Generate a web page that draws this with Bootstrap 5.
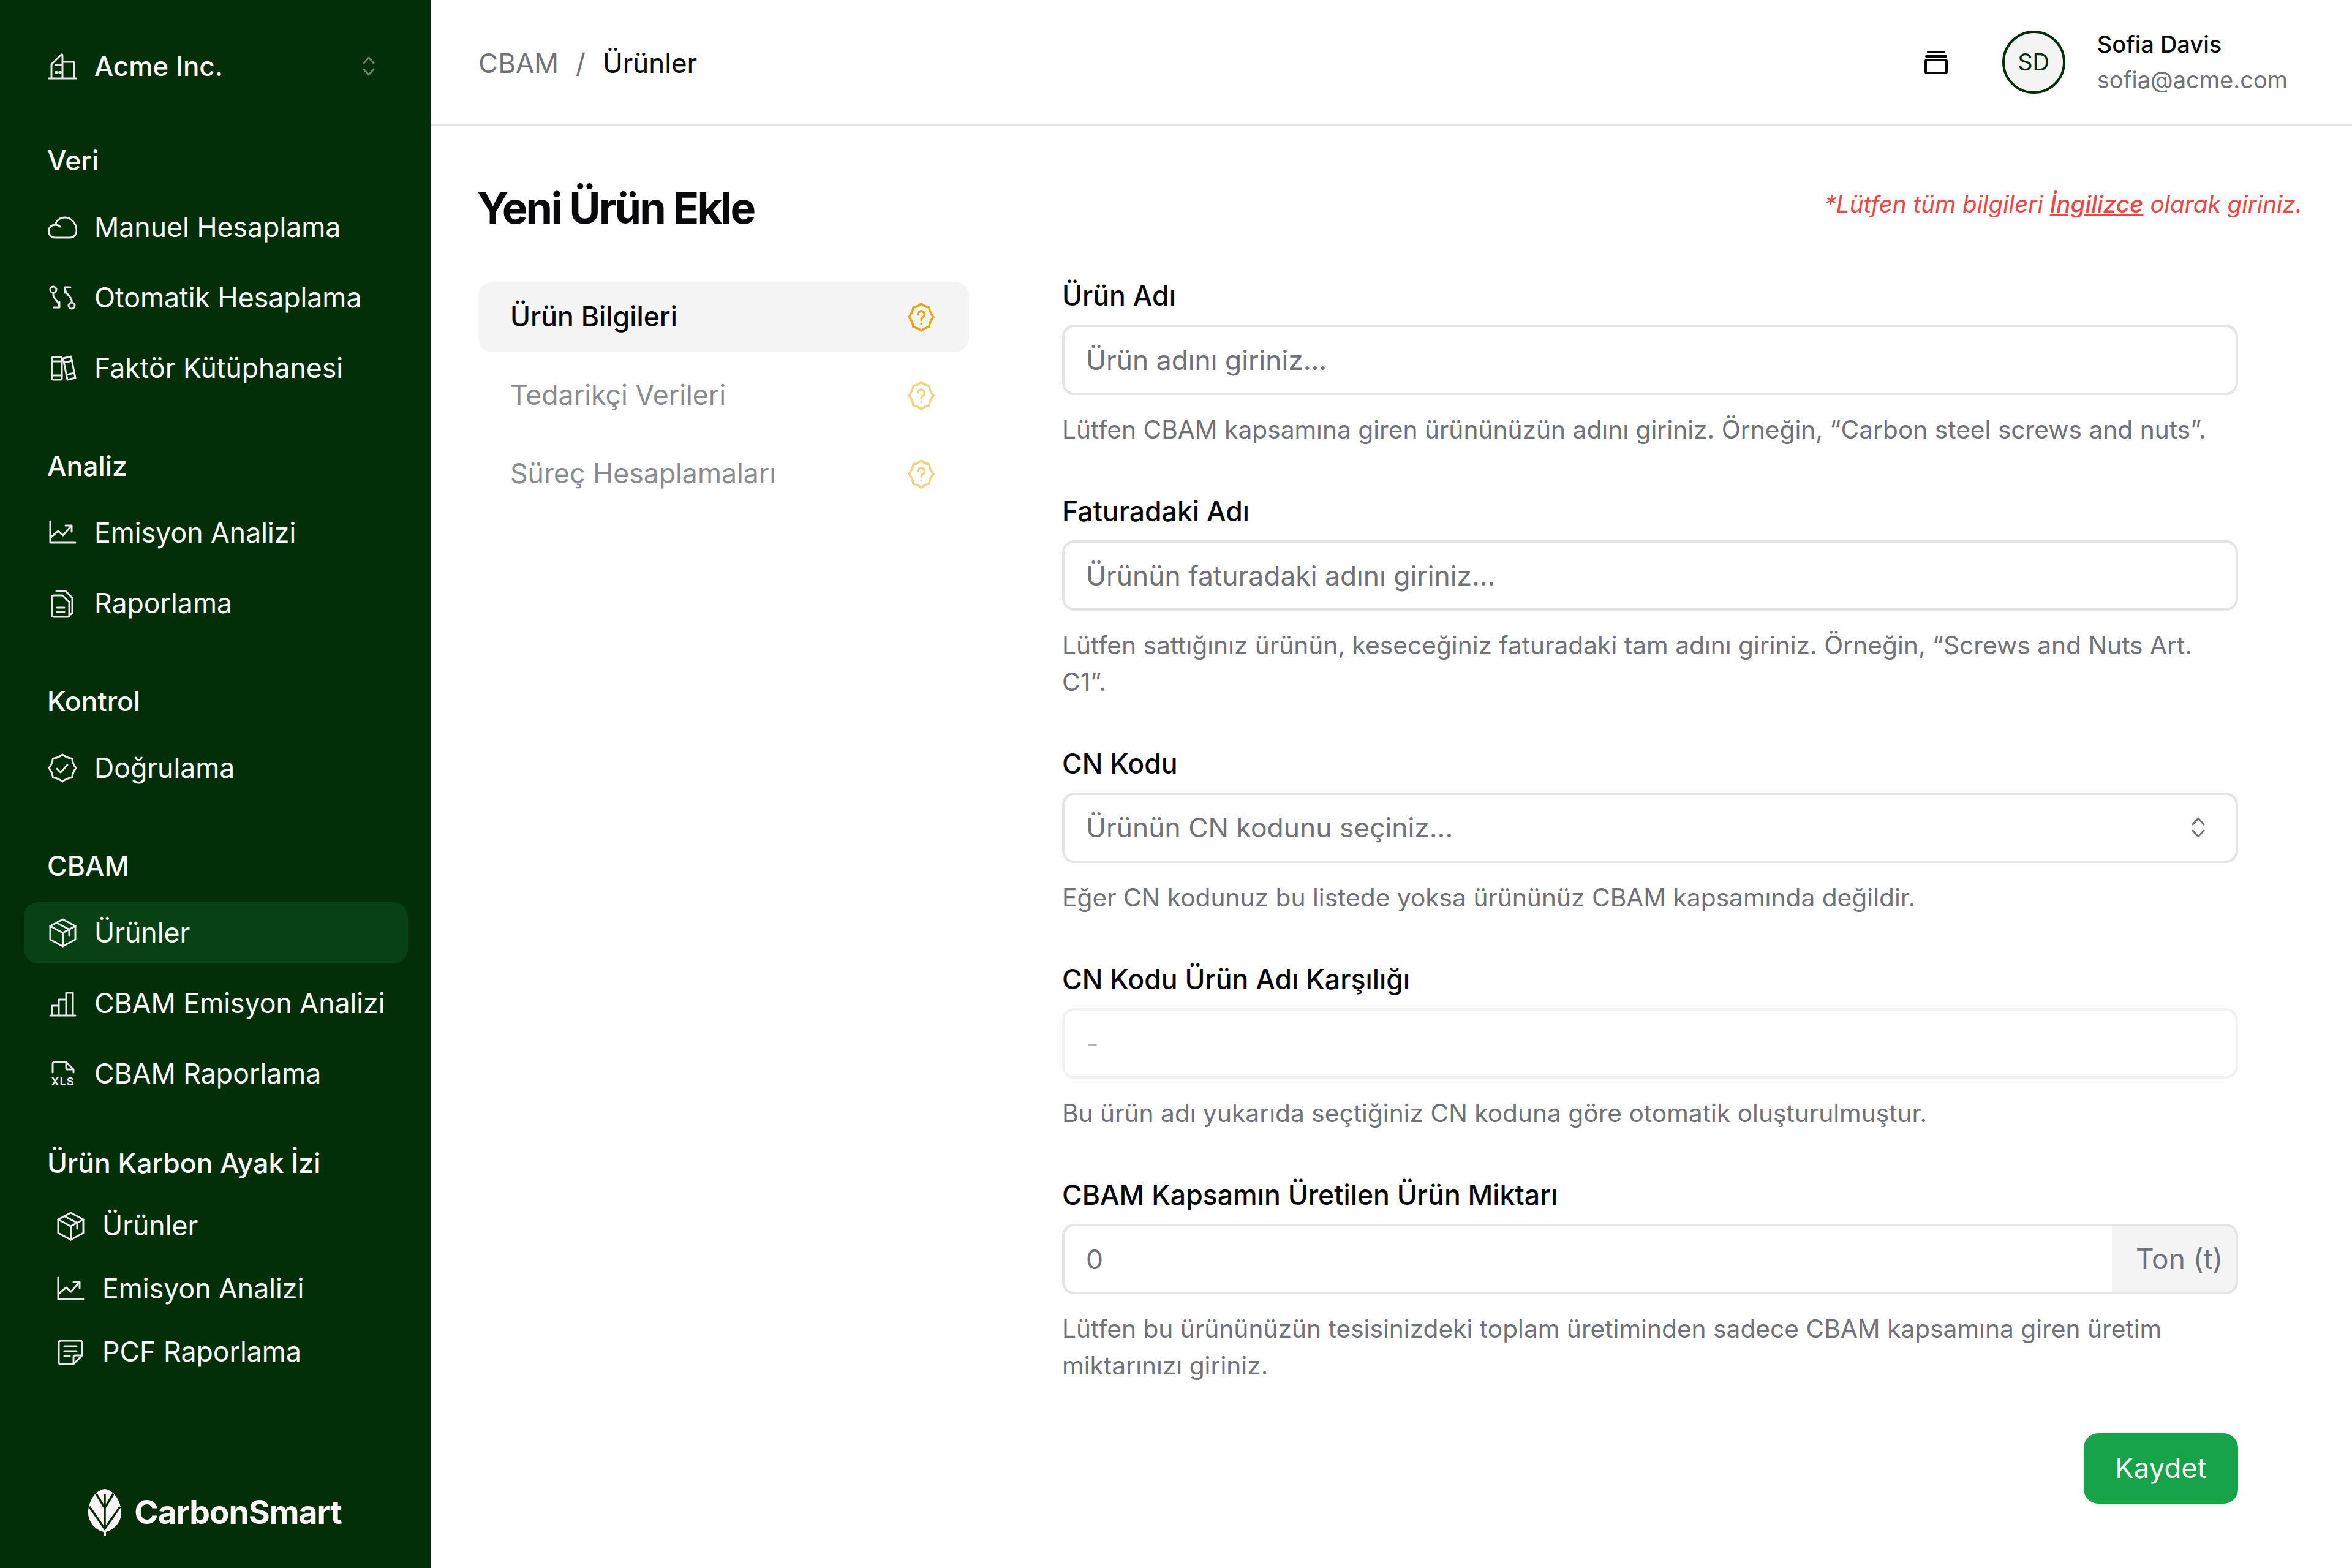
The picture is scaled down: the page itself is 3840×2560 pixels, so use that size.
<!DOCTYPE html>
<html lang="tr">
<head>
    <meta charset="UTF-8">
    <meta name="viewport" content="width=device-width, initial-scale=1.0">
    <title>Yeni Ürün Ekle</title>
    <link href="https://cdn.jsdelivr.net/npm/bootstrap@5.3.0/dist/css/bootstrap.min.css" rel="stylesheet">
    <style>
        body { font-family: Inter, "Liberation Sans", sans-serif; font-size: 40px; color: #09090b; background: #fff; }
        .app-shell { min-height: 2560px; }

        /* Sidebar */
        .side-bar { width: 704px; flex-shrink: 0; background: #022f08; color: #fafafa; padding: 58px 38px 51px 39px; }
        .brand-row { height: 100px; padding: 0 39px; gap: 28px; font-size: 44px; font-weight: 500; }
        .brand-chevron { margin-left: auto; margin-right: 15px; }
        .side-title { height: 60px; line-height: 60px; margin: 74px 0 29px 38px; font-size: 44.500px; font-weight: 500; }
        .side-title.next-group { margin-top: 80px; }
        .side-title.last-group { margin-top: 66px; margin-bottom: 30px; }
        .side-list { gap: 15px; }
        .side-list .nav-link { height: 100px; padding: 0 15px 0 39px; gap: 28px; display: flex; align-items: center; color: #fafafa; font-size: 44.600px; border-radius: 24px; }
        .side-list .nav-link.active { background: #084214; color: #fafafa; }
        .side-list.sub-list { gap: 18px; margin-left: 13px; }
        .side-list.sub-list .nav-link { height: 85px; }
        .side-icon { width: 48px; height: 48px; flex-shrink: 0; fill: none; stroke: #e8e8e8; stroke-width: 3; stroke-linecap: round; stroke-linejoin: round; }
        .brand-logo { margin-top: auto; gap: 20px; padding-right: 4px; font-size: 53.500px; font-weight: 700; letter-spacing: -.02em; color: #fdf4f4; }

        /* Header */
        .top-bar { height: 205px; padding: 0 105px 0 77px; border-bottom: 3px solid #e4e4e7; }
        .top-bar .breadcrumb { --bs-breadcrumb-margin-bottom: 0; --bs-breadcrumb-item-padding-x: 28px; --bs-breadcrumb-divider-color: #71717a; font-size: 44px; padding-top: 3px; }
        .top-bar .breadcrumb-item a { color: #71717a; text-decoration: none; }
        .top-bar .breadcrumb-item.active { color: #09090b; }
        .user-avatar { width: 103px; height: 103px; margin-left: 88px; border: 4px solid #022f08; background: #f4f4f5; color: #022f08; font-size: 38px; }
        .user-info { margin-left: 52px; }
        .user-name { font-size: 38px; font-weight: 500; line-height: 58px; }
        .user-mail { font-size: 38px; line-height: 58px; color: #71717a; }

        /* Content */
        .page-body { padding: 0 81px 0 77px; }
        .page-title { font-size: 70px; font-weight: 700; letter-spacing: -.04em; line-height: 90px; margin: 0 0 0 -2px; }
        .title-row { height: 90px; margin-top: 90px; }
        .en-note { color: #ef4444; font-style: italic; font-size: 38.700px; position: relative; top: -7px; }
        .en-note u { font-weight: 500; }
        .form-area { margin-top: 45px; }
        .step-list { width: 801px; flex-shrink: 0; margin-top: 30px; margin-right: 152px; gap: 13px; }
        .step-list .nav-link { height: 115px; padding: 0 54px 0 52px; display: flex; align-items: center; justify-content: space-between; color: #8a8a91; font-size: 44.600px; border-radius: 24px; }
        .step-list .nav-link.active { background: #f4f4f5; color: #09090b; font-weight: 500; }
        .step-list .nav-link svg { opacity: .5; }
        .step-list .nav-link.active svg { opacity: 1; }
        .step-icon { width: 48px; height: 48px; fill: none; stroke: #e5a70a; stroke-width: 3.500; stroke-linecap: round; stroke-linejoin: round; }
        .form-col { width: 1920px; margin-top: 23px; }
        .form-block { margin-bottom: 73px; }
        .form-block .form-label { display: block; font-size: 44.600px; font-weight: 500; line-height: 60px; margin-bottom: 17px; color: #09090b; }
        .form-block .form-control, .form-block .form-select { height: 115px; padding: 0 35px; font-size: 44.400px; color: #71717a; border: 4px solid #e4e4e7; border-radius: 20px; background-image: none; box-shadow: none; }
        .form-block .form-control::placeholder { color: #71717a; opacity: 1; }
        .form-block .form-control:disabled { background: #fff; border-color: #f1f1f3; }
        .form-block .form-control:disabled::placeholder { color: #b4b4b9; }
        .form-block .input-group-text { width: 207px; padding: 0 28px 0 40px; font-size: 46px; color: #71717a; background: #f4f4f5; border: 4px solid #e4e4e7; border-left: 0; border-radius: 0 20px 20px 0; }
        .form-block .input-group .form-control { border-right: 0; border-radius: 20px 0 0 20px; }
        .form-block .form-text { margin-top: 27px; font-size: 40.700px; line-height: 60px; color: #71717a; }
        .select-chevron { position: absolute; right: 54px; top: 39px; pointer-events: none; }
        .form-actions { margin-top: 74px; }
        .save-btn { width: 252px; height: 115px; margin-top: 6px; font-size: 45.500px; color: #fafafa; background: #16a34a; border: 0; border-radius: 24px; box-shadow: 0 3px 6px rgba(0, 0, 0, .08); }
    </style>
</head>
<body>
<svg width="0" height="0" class="position-absolute">
    <symbol id="ico-box" viewBox="0 0 48 48"><path d="M24.500 2 45 13v22L24.500 46 4 35V13Z"/><path d="M4 13l20.500 11L45 13M24.500 24v22M14 7.500 35 18.500V28"/></symbol>
    <symbol id="ico-chart" viewBox="0 0 48 48"><path d="M4 5v35h41M4 32l13-11 8 7 13-15M29 12h10v10"/></symbol>
    <symbol id="ico-badge-q" viewBox="0 0 48 48"><path d="M24 2Q30.900 7.400 37 8Q37.500 15.500 44 24Q37.500 30.900 37 40Q30.900 40.600 24 46Q17.100 40.600 11 40Q10.500 30.900 4 24Q10.500 15.500 11 8Q17.100 7.400 24 2Z"/><path d="M18.500 19.500a5.500 5.500 0 1 1 8.500 4.600c-2 1.300-3 2.400-3 4.400M24 34.500v.1"/></symbol>
</svg>

<div class="app-shell d-flex">
    <!-- Sol menü -->
    <aside class="side-bar d-flex flex-column">
        <div class="brand-row d-flex align-items-center">
            <svg class="side-icon" viewBox="0 0 48 48"><path d="M1 44h46M6 43V23q0-2 1.500-3.500L21 6q3-3 3 1v36M24 17h17q2 0 2 2v24"/><path d="M13 22h2M19 22h2M13 34h2M19 34h2" stroke-width="4"/></svg>
            <span>Acme Inc.</span>
            <svg class="brand-chevron" width="20" height="32" viewBox="0 0 20 32" fill="none" stroke="#fff" stroke-opacity=".4" stroke-width="3" stroke-linecap="round" stroke-linejoin="round"><path d="M2 11 10 2l8 9M2 21l8 9 8-9"/></svg>
        </div>

        <div class="side-title">Veri</div>
        <nav class="nav flex-column side-list">
            <a class="nav-link" href="#"><svg class="side-icon" viewBox="0 0 48 48"><path d="M12 41h24c6.500 0 11-5 11-11.500C47 18 38 8 28 8c-8 0-14 5-16 12C5.500 20 1.500 25 1.500 30.500 1.500 36.500 6 41 12 41Z"/><path d="M12 20c3 0 6 1 8 3"/></svg>Manuel Hesaplama</a>
            <a class="nav-link" href="#"><svg class="side-icon" viewBox="0 0 48 48"><circle cx="9" cy="11" r="5"/><circle cx="39" cy="37" r="5"/><path d="M9 16v4c0 5 10 10 10 20M10 40h9v-9M39 32v-4c0-5-11-10-11-20M37 7H28v9"/></svg>Otomatik Hesaplama</a>
            <a class="nav-link" href="#"><svg class="side-icon" viewBox="0 0 48 48"><rect x="7" y="6" width="16" height="37" rx="2"/><path d="M7 13h16M7 36h16M25 8l13-3 7 35-13 3ZM27 15l13-3M31 35l12-3"/></svg>Faktör Kütüphanesi</a>
        </nav>

        <div class="side-title next-group">Analiz</div>
        <nav class="nav flex-column side-list">
            <a class="nav-link" href="#"><svg class="side-icon"><use href="#ico-chart"/></svg>Emisyon Analizi</a>
            <a class="nav-link" href="#"><svg class="side-icon" viewBox="0 0 48 48"><path d="M14 4h15l11 11v24q0 2-3 3M7 14q0-3 3-3h14l11 11v21q0 3-3 3H10q-3 0-3-3Z"/><path d="M15 31h12M15 38h12"/></svg>Raporlama</a>
        </nav>

        <div class="side-title next-group">Kontrol</div>
        <nav class="nav flex-column side-list">
            <a class="nav-link" href="#"><svg class="side-icon" viewBox="0 0 48 48"><path d="M24 2Q30.900 7.400 39.600 8.400Q40.600 17.100 46 24Q40.600 30.900 39.600 39.600Q30.900 40.600 24 46Q17.100 40.600 8.400 39.600Q7.400 30.900 2 24Q7.400 17.100 8.400 8.400Q17.100 7.400 24 2Z"/><path d="M15 25l6 6 11-12"/></svg>Doğrulama</a>
        </nav>

        <div class="side-title next-group">CBAM</div>
        <nav class="nav flex-column side-list">
            <a class="nav-link active" href="#"><svg class="side-icon"><use href="#ico-box"/></svg>Ürünler</a>
            <a class="nav-link" href="#"><svg class="side-icon" viewBox="0 0 48 48"><path d="M4 44h41M7 43V28h11v15M18 43V18h12v25M30 43V7h11v36"/></svg>CBAM Emisyon Analizi</a>
            <a class="nav-link" href="#"><svg class="side-icon" viewBox="0 0 48 48"><path d="M8 22V8q0-3 3-3h19l12 12v5M30 5v10q0 2 2 2h10"/><text x="24.500" y="43" text-anchor="middle" font-family="Inter, sans-serif" font-size="18" font-weight="700" letter-spacing="1" fill="#e8e8e8" stroke="none">XLS</text></svg>CBAM Raporlama</a>
        </nav>

        <div class="side-title last-group">Ürün Karbon Ayak İzi</div>
        <nav class="nav flex-column side-list sub-list">
            <a class="nav-link" href="#"><svg class="side-icon"><use href="#ico-box"/></svg>Ürünler</a>
            <a class="nav-link" href="#"><svg class="side-icon"><use href="#ico-chart"/></svg>Emisyon Analizi</a>
            <a class="nav-link" href="#"><svg class="side-icon" viewBox="0 0 48 48"><path d="M29 43H8q-3 0-3-3V8q0-3 3-3h32q3 0 3 3v21ZM29 43V32q0-3 3-3h11M14 14h20M14 22h20M14 30h9"/></svg>PCF Raporlama</a>
        </nav>

        <div class="brand-logo d-flex align-items-center justify-content-center">
            <svg width="56" height="78" viewBox="0 0 56 78">
                <path d="M28 1C12 3 1 22 1 40c0 15 12 28 25 31v7h4v-7c13-3 25-16 25-31C55 22 44 3 28 1Z" fill="#fdf4f4"/>
                <path d="M28 10v56M14 9 28 32 42 9M3 30l25 36 25-36" fill="none" stroke="#022f08" stroke-width="3.500"/>
            </svg>
            <span>CarbonSmart</span>
        </div>
    </aside>

    <!-- Ana içerik -->
    <main class="flex-grow-1 min-w-0">
        <header class="top-bar d-flex align-items-center">
            <ol class="breadcrumb">
                <li class="breadcrumb-item"><a href="#">CBAM</a></li>
                <li class="breadcrumb-item active">Ürünler</li>
            </ol>
            <svg class="ms-auto" width="40" height="40" viewBox="0 0 40 40" fill="none" stroke="#09090b" stroke-width="4" stroke-linecap="round" stroke-linejoin="round"><path d="M7 4h26M4 11h32"/><rect x="3" y="17" width="34" height="21" rx="2"/></svg>
            <div class="user-avatar rounded-circle d-flex align-items-center justify-content-center">SD</div>
            <div class="user-info">
                <div class="user-name">Sofia Davis</div>
                <div class="user-mail">sofia@acme.com</div>
            </div>
        </header>

        <div class="page-body">
            <div class="title-row d-flex align-items-center justify-content-between">
                <h1 class="page-title">Yeni Ürün Ekle</h1>
                <span class="en-note">*Lütfen tüm bilgileri <u>İngilizce</u> olarak giriniz.</span>
            </div>

            <div class="form-area d-flex align-items-start">
                <nav class="nav flex-column step-list">
                    <a class="nav-link active" href="#">Ürün Bilgileri<svg class="step-icon"><use href="#ico-badge-q"/></svg></a>
                    <a class="nav-link" href="#">Tedarikçi Verileri<svg class="step-icon"><use href="#ico-badge-q"/></svg></a>
                    <a class="nav-link" href="#">Süreç Hesaplamaları<svg class="step-icon"><use href="#ico-badge-q"/></svg></a>
                </nav>

                <form class="form-col">
                    <div class="form-block">
                        <label class="form-label" for="productName">Ürün Adı</label>
                        <input class="form-control" id="productName" type="text" placeholder="Ürün adını giriniz...">
                        <div class="form-text">Lütfen CBAM kapsamına giren ürününüzün adını giriniz. Örneğin, “Carbon steel screws and nuts”.</div>
                    </div>
                    <div class="form-block">
                        <label class="form-label" for="invoiceName">Faturadaki Adı</label>
                        <input class="form-control" id="invoiceName" type="text" placeholder="Ürünün faturadaki adını giriniz...">
                        <div class="form-text">Lütfen sattığınız ürünün, keseceğiniz faturadaki tam adını giriniz. Örneğin, “Screws and Nuts Art. C1”.</div>
                    </div>
                    <div class="form-block">
                        <label class="form-label" for="cnCode">CN Kodu</label>
                        <div class="position-relative">
                            <select class="form-select" id="cnCode"><option>Ürünün CN kodunu seçiniz...</option></select>
                            <svg class="select-chevron" width="22" height="36" viewBox="0 0 22 36" fill="none" stroke="#71717a" stroke-width="3" stroke-linecap="round" stroke-linejoin="round"><path d="M2 13 11 3l9 10M2 23l9 10 9-10"/></svg>
                        </div>
                        <div class="form-text">Eğer CN kodunuz bu listede yoksa ürününüz CBAM kapsamında değildir.</div>
                    </div>
                    <div class="form-block">
                        <label class="form-label" for="cnName">CN Kodu Ürün Adı Karşılığı</label>
                        <input class="form-control" id="cnName" type="text" placeholder="-" disabled>
                        <div class="form-text">Bu ürün adı yukarıda seçtiğiniz CN koduna göre otomatik oluşturulmuştur.</div>
                    </div>
                    <div class="form-block mb-0">
                        <label class="form-label" for="amount">CBAM Kapsamın Üretilen Ürün Miktarı</label>
                        <div class="input-group">
                            <input class="form-control" id="amount" type="text" placeholder="0">
                            <span class="input-group-text">Ton (t)</span>
                        </div>
                        <div class="form-text">Lütfen bu ürününüzün tesisinizdeki toplam üretiminden sadece CBAM kapsamına giren üretim miktarınızı giriniz.</div>
                    </div>
                    <div class="form-actions d-flex justify-content-end">
                        <button class="btn save-btn" type="button">Kaydet</button>
                    </div>
                </form>
            </div>
        </div>
    </main>
</div>
<script src="https://cdn.jsdelivr.net/npm/bootstrap@5.3.0/dist/js/bootstrap.bundle.min.js"></script>
</body>
</html>
